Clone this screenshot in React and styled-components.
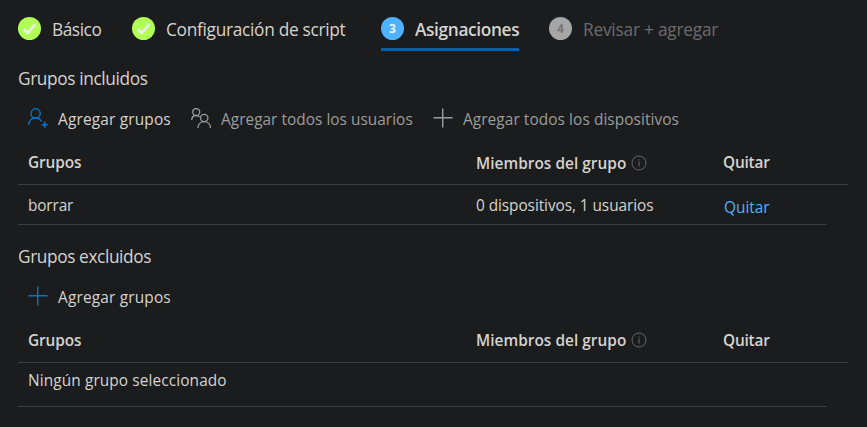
import React from "react";
import styled, { createGlobalStyle, css } from "styled-components";

const Global = createGlobalStyle`
  * { box-sizing: border-box; }
  body { margin: 0; background: #1b1c1e; }
`;

const Page = styled.main`
  width: 867px;
  height: 427px;
  padding: 17px 19px 0 18px;
  overflow: hidden;
  background: #1b1c1e;
  color: #d6d3cd;
  font-family: "Open Sans", "Noto Sans", sans-serif;
  font-size: 15.4px;
`;

const Label = styled.span`
  display: block;
  white-space: nowrap;
  letter-spacing: ${(p) => p.$track || 0}px;
`;

const Steps = styled.nav`
  display: flex;
  height: 34px;
`;

const Step = styled.div`
  display: flex;
  align-items: flex-start;
  gap: 11px;
  height: 34px;
  margin-right: ${(p) => p.$after || 0}px;
  width: ${(p) => p.$width}px;
  font-size: 17.3px;
  line-height: 26px;
  color: ${(p) => (p.$state === "pending" ? "#6b6b6b" : "#d6d3cd")};
  ${(p) =>
    p.$state === "active" &&
    css`
      font-weight: 600;
      border-bottom: 3px solid #0062ad;
    `}
`;

const Badge = styled.span`
  flex: none;
  display: flex;
  align-items: center;
  justify-content: center;
  width: 23px;
  height: 23px;
  border-radius: 50%;
  font-size: 12px;
  font-weight: 700;
  line-height: 1;
  color: ${(p) => (p.$state === "pending" ? "#777" : "#eef4fa")};
  background: ${(p) =>
    ({ done: "#b0ff57", active: "#4db2ff", pending: "#a6a6a6" })[p.$state]};
`;

const Title = styled.h2`
  margin: 0;
  height: ${(p) => p.$height}px;
  padding-top: ${(p) => p.$top}px;
  font-size: 17.3px;
  font-weight: 400;
  line-height: 24px;
`;

const Toolbar = styled.div`
  display: flex;
  height: 40px;
  padding-left: 10px;
`;

const Command = styled.button`
  display: flex;
  align-items: center;
  gap: 10px;
  width: ${(p) => p.$width}px;
  height: 40px;
  padding: 0;
  border: 0;
  background: none;
  font: inherit;
  color: ${(p) => (p.$muted ? "#9c9c9a" : "#d6d3cd")};
  svg {
    flex: none;
    margin-top: -2px;
    color: ${(p) => (p.$muted ? "#9c9c9a" : "#0a74cc")};
  }
`;

const Row = styled.div`
  display: grid;
  grid-template-columns: 448px 247px 1fr;
  width: ${(p) => (p.$head ? 830 : 809)}px;
  height: ${(p) => p.$height}px;
  padding: ${(p) => p.$top}px 0 0 10px;
  border-bottom: 1px solid #3d3d3f;
  line-height: 22px;
  font-weight: ${(p) => (p.$head ? 600 : 400)};
`;

const Cell = styled.div`
  display: flex;
  gap: 5px;
  padding-top: ${(p) => p.$drop || 0}px;
`;

const Link = styled.a`
  color: #4db2ff;
  padding: 2px 0 0 1px;
`;

const InfoMark = styled.svg`
  flex: none;
  margin-top: 2px;
`;

const Check = () => (
  <svg width="23" height="23" viewBox="0 0 23 23" fill="none">
    <path d="M5.8 12.2 9.6 16 17.3 7.3" stroke="#ececec" strokeWidth="2.7" />
  </svg>
);

const PersonAdd = () => (
  <svg width="20" height="20" viewBox="0 0 20 20" fill="none" stroke="currentColor" strokeWidth="1.4">
    <circle cx="7.6" cy="5.4" r="4.6" />
    <path d="M.7 16.8C.9 12.7 3.7 10 7.6 10c2.7 0 4.9 1.3 6 3.5" />
    <path d="M16.7 13.6v6.2M13.6 16.7h6.2" strokeWidth="1.6" />
  </svg>
);

const People = () => (
  <svg width="20" height="20" viewBox="0 0 20 20" fill="none" stroke="currentColor" strokeWidth="1.3">
    <circle cx="5.2" cy="4" r="3.5" />
    <path d="M.7 12C.8 9.3 2.7 7.5 5.2 7.5c1.4 0 2.7.6 3.5 1.6" />
    <circle cx="13.2" cy="10" r="3.7" />
    <path d="M6.9 20c.1-3.7 2.8-6.3 6.3-6.3s6.2 2.6 6.3 6.3" />
  </svg>
);

const Plus = () => (
  <svg width="20" height="20" viewBox="0 0 20 20" stroke="currentColor" strokeWidth="1.4">
    <path d="M9.700.5v19M.5 9.700h19" />
  </svg>
);

const Info = () => (
  <InfoMark width="16" height="16" viewBox="0 0 16 16" fill="none" stroke="#686868">
    <circle cx="8" cy="8" r="7" />
    <path d="M8 6.500v5M8 4.300v1.100" />
  </InfoMark>
);

const TableHead = ({ height, top, drop }) => (
  <Row $head $height={height} $top={top}>
    <Cell><Label $track={-0.1}>Grupos</Label></Cell>
    <Cell $drop={drop}><Label $track={0.03}>Miembros del grupo</Label><Info /></Cell>
    <Cell><Label $track={-0.2}>Quitar</Label></Cell>
  </Row>
);

export default function App() {
  return (
    <Page>
      <Global />
      <Steps>
        <Step $state="done" $width={84} $after={30}>
          <Badge $state="done"><Check /></Badge><Label $track={-0.45}>Básico</Label>
        </Step>
        <Step $state="done" $width={214} $after={35}>
          <Badge $state="done"><Check /></Badge><Label $track={-0.3}>Configuración de script</Label>
        </Step>
        <Step $state="active" $width={138} $after={30}>
          <Badge $state="active">3</Badge><Label $track={-0.36}>Asignaciones</Label>
        </Step>
        <Step $state="pending" $width={170}>
          <Badge $state="pending">4</Badge><Label $track={-0.22}>Revisar + agregar</Label>
        </Step>
      </Steps>
      <Title $height={48} $top={16}><Label $track={-0.38}>Grupos incluidos</Label></Title>
      <Toolbar>
        <Command $width={163}><PersonAdd /><Label $track={0.18}>Agregar grupos</Label></Command>
        <Command $width={242} $muted><People /><Label $track={0.03}>Agregar todos los usuarios</Label></Command>
        <Command $width={250} $muted><Plus /><Label $track={0.08}>Agregar todos los dispositivos</Label></Command>
      </Toolbar>
      <TableHead height={46} top={13} drop={1} />
      <Row $height={40} $top={10}>
        <Cell><Label $track={-0.15}>borrar</Label></Cell>
        <Cell><Label $track={-0.07}>0 dispositivos, 1 usuarios</Label></Cell>
        <Link><Label>Quitar</Label></Link>
      </Row>
      <Title $height={52} $top={20}><Label $track={-0.4}>Grupos excluidos</Label></Title>
      <Toolbar>
        <Command $width={163}><Plus /><Label $track={0.18}>Agregar grupos</Label></Command>
      </Toolbar>
      <TableHead height={46} top={13} drop={0} />
      <Row $height={44} $top={7}>
        <Cell><Label $track={0.11}>Ningún grupo seleccionado</Label></Cell>
      </Row>
    </Page>
  );
}
